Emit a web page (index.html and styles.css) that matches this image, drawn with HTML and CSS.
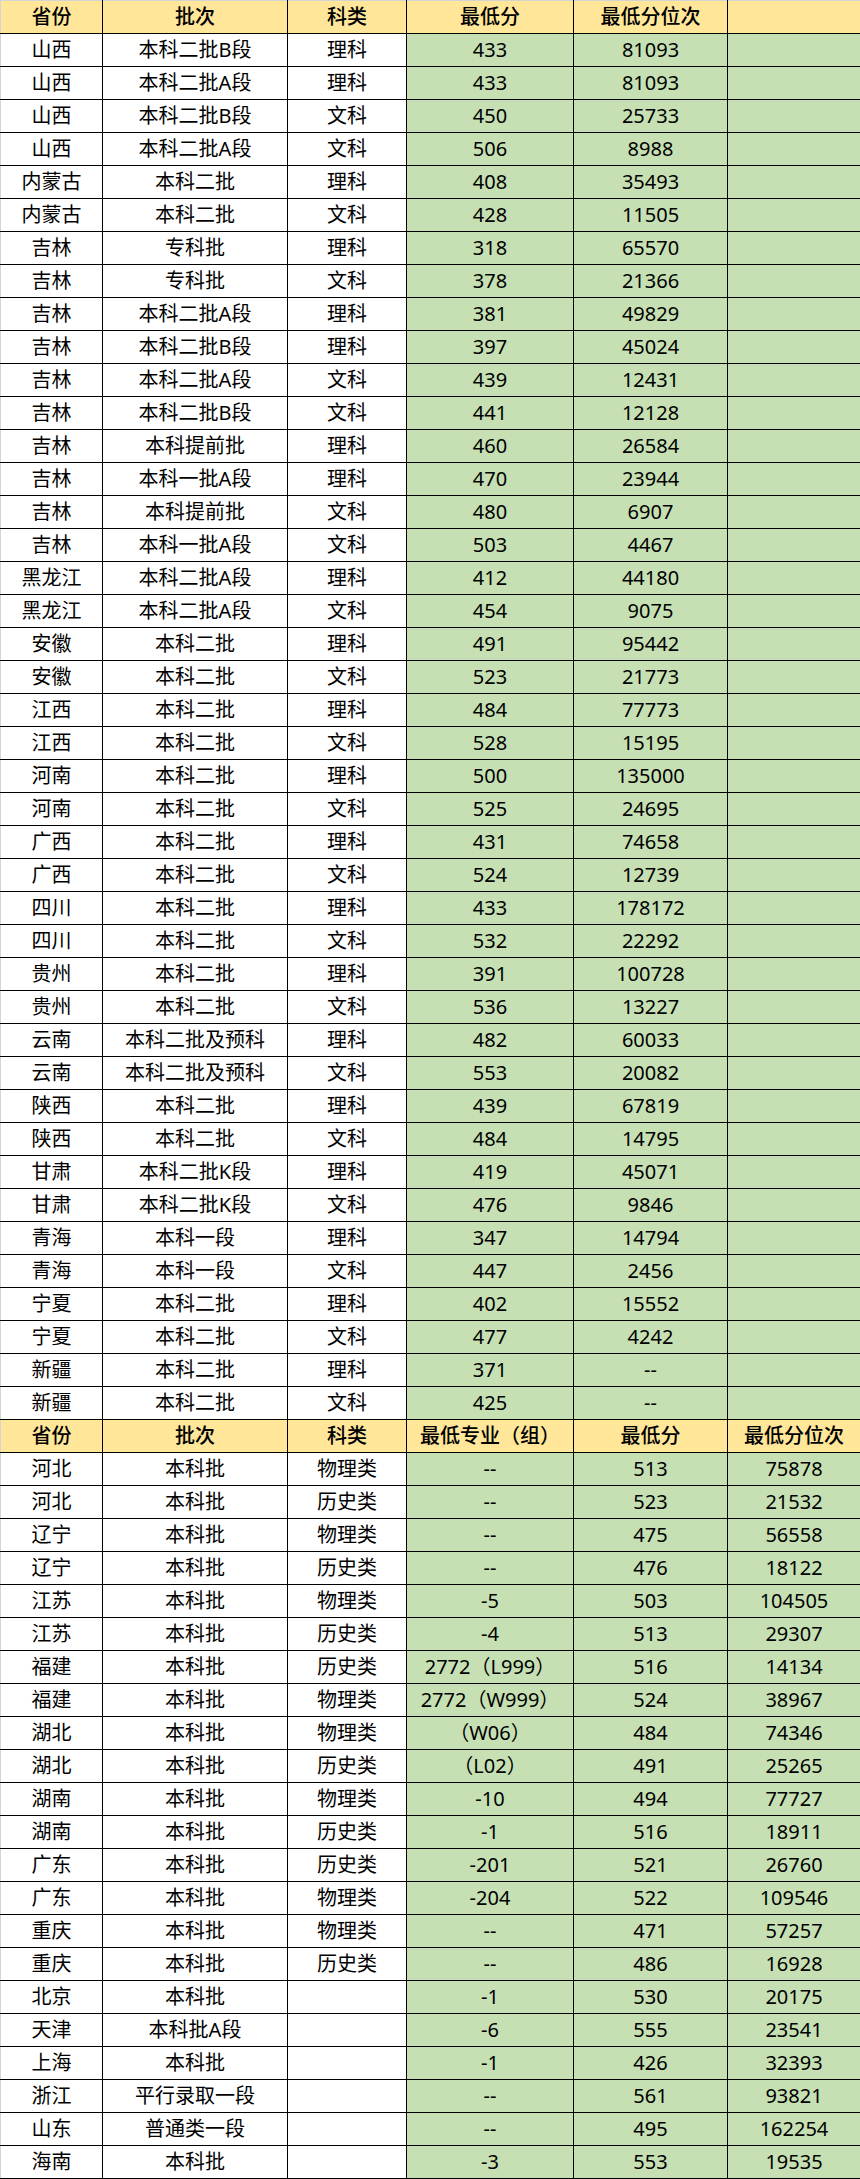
FILE: index.html
```html
<!DOCTYPE html>
<html lang="zh-CN">
<head>
<meta charset="utf-8">
<title>录取分数</title>
<link rel="stylesheet" href="styles.css">
</head>
<body>
<table class="sheet">
<colgroup>
<col class="c1"><col class="c2"><col class="c3"><col class="c4"><col class="c5"><col class="c6">
</colgroup>
<tbody>
<tr class="hd first"><td>省份</td><td>批次</td><td>科类</td><td>最低分</td><td>最低分位次</td><td></td></tr>
<tr><td>山西</td><td>本科二批B段</td><td>理科</td><td class="g">433</td><td class="g">81093</td><td class="g"></td></tr>
<tr><td>山西</td><td>本科二批A段</td><td>理科</td><td class="g">433</td><td class="g">81093</td><td class="g"></td></tr>
<tr><td>山西</td><td>本科二批B段</td><td>文科</td><td class="g">450</td><td class="g">25733</td><td class="g"></td></tr>
<tr><td>山西</td><td>本科二批A段</td><td>文科</td><td class="g">506</td><td class="g">8988</td><td class="g"></td></tr>
<tr><td>内蒙古</td><td>本科二批</td><td>理科</td><td class="g">408</td><td class="g">35493</td><td class="g"></td></tr>
<tr><td>内蒙古</td><td>本科二批</td><td>文科</td><td class="g">428</td><td class="g">11505</td><td class="g"></td></tr>
<tr><td>吉林</td><td>专科批</td><td>理科</td><td class="g">318</td><td class="g">65570</td><td class="g"></td></tr>
<tr><td>吉林</td><td>专科批</td><td>文科</td><td class="g">378</td><td class="g">21366</td><td class="g"></td></tr>
<tr><td>吉林</td><td>本科二批A段</td><td>理科</td><td class="g">381</td><td class="g">49829</td><td class="g"></td></tr>
<tr><td>吉林</td><td>本科二批B段</td><td>理科</td><td class="g">397</td><td class="g">45024</td><td class="g"></td></tr>
<tr><td>吉林</td><td>本科二批A段</td><td>文科</td><td class="g">439</td><td class="g">12431</td><td class="g"></td></tr>
<tr><td>吉林</td><td>本科二批B段</td><td>文科</td><td class="g">441</td><td class="g">12128</td><td class="g"></td></tr>
<tr><td>吉林</td><td>本科提前批</td><td>理科</td><td class="g">460</td><td class="g">26584</td><td class="g"></td></tr>
<tr><td>吉林</td><td>本科一批A段</td><td>理科</td><td class="g">470</td><td class="g">23944</td><td class="g"></td></tr>
<tr><td>吉林</td><td>本科提前批</td><td>文科</td><td class="g">480</td><td class="g">6907</td><td class="g"></td></tr>
<tr><td>吉林</td><td>本科一批A段</td><td>文科</td><td class="g">503</td><td class="g">4467</td><td class="g"></td></tr>
<tr><td>黑龙江</td><td>本科二批A段</td><td>理科</td><td class="g">412</td><td class="g">44180</td><td class="g"></td></tr>
<tr><td>黑龙江</td><td>本科二批A段</td><td>文科</td><td class="g">454</td><td class="g">9075</td><td class="g"></td></tr>
<tr><td>安徽</td><td>本科二批</td><td>理科</td><td class="g">491</td><td class="g">95442</td><td class="g"></td></tr>
<tr><td>安徽</td><td>本科二批</td><td>文科</td><td class="g">523</td><td class="g">21773</td><td class="g"></td></tr>
<tr><td>江西</td><td>本科二批</td><td>理科</td><td class="g">484</td><td class="g">77773</td><td class="g"></td></tr>
<tr><td>江西</td><td>本科二批</td><td>文科</td><td class="g">528</td><td class="g">15195</td><td class="g"></td></tr>
<tr><td>河南</td><td>本科二批</td><td>理科</td><td class="g">500</td><td class="g">135000</td><td class="g"></td></tr>
<tr><td>河南</td><td>本科二批</td><td>文科</td><td class="g">525</td><td class="g">24695</td><td class="g"></td></tr>
<tr><td>广西</td><td>本科二批</td><td>理科</td><td class="g">431</td><td class="g">74658</td><td class="g"></td></tr>
<tr><td>广西</td><td>本科二批</td><td>文科</td><td class="g">524</td><td class="g">12739</td><td class="g"></td></tr>
<tr><td>四川</td><td>本科二批</td><td>理科</td><td class="g">433</td><td class="g">178172</td><td class="g"></td></tr>
<tr><td>四川</td><td>本科二批</td><td>文科</td><td class="g">532</td><td class="g">22292</td><td class="g"></td></tr>
<tr><td>贵州</td><td>本科二批</td><td>理科</td><td class="g">391</td><td class="g">100728</td><td class="g"></td></tr>
<tr><td>贵州</td><td>本科二批</td><td>文科</td><td class="g">536</td><td class="g">13227</td><td class="g"></td></tr>
<tr><td>云南</td><td>本科二批及预科</td><td>理科</td><td class="g">482</td><td class="g">60033</td><td class="g"></td></tr>
<tr><td>云南</td><td>本科二批及预科</td><td>文科</td><td class="g">553</td><td class="g">20082</td><td class="g"></td></tr>
<tr><td>陕西</td><td>本科二批</td><td>理科</td><td class="g">439</td><td class="g">67819</td><td class="g"></td></tr>
<tr><td>陕西</td><td>本科二批</td><td>文科</td><td class="g">484</td><td class="g">14795</td><td class="g"></td></tr>
<tr><td>甘肃</td><td>本科二批K段</td><td>理科</td><td class="g">419</td><td class="g">45071</td><td class="g"></td></tr>
<tr><td>甘肃</td><td>本科二批K段</td><td>文科</td><td class="g">476</td><td class="g">9846</td><td class="g"></td></tr>
<tr><td>青海</td><td>本科一段</td><td>理科</td><td class="g">347</td><td class="g">14794</td><td class="g"></td></tr>
<tr><td>青海</td><td>本科一段</td><td>文科</td><td class="g">447</td><td class="g">2456</td><td class="g"></td></tr>
<tr><td>宁夏</td><td>本科二批</td><td>理科</td><td class="g">402</td><td class="g">15552</td><td class="g"></td></tr>
<tr><td>宁夏</td><td>本科二批</td><td>文科</td><td class="g">477</td><td class="g">4242</td><td class="g"></td></tr>
<tr><td>新疆</td><td>本科二批</td><td>理科</td><td class="g">371</td><td class="g">--</td><td class="g"></td></tr>
<tr><td>新疆</td><td>本科二批</td><td>文科</td><td class="g">425</td><td class="g">--</td><td class="g"></td></tr>
<tr class="hd"><td>省份</td><td>批次</td><td>科类</td><td>最低专业（组）</td><td>最低分</td><td>最低分位次</td></tr>
<tr><td>河北</td><td>本科批</td><td>物理类</td><td class="g">--</td><td class="g">513</td><td class="g">75878</td></tr>
<tr><td>河北</td><td>本科批</td><td>历史类</td><td class="g">--</td><td class="g">523</td><td class="g">21532</td></tr>
<tr><td>辽宁</td><td>本科批</td><td>物理类</td><td class="g">--</td><td class="g">475</td><td class="g">56558</td></tr>
<tr><td>辽宁</td><td>本科批</td><td>历史类</td><td class="g">--</td><td class="g">476</td><td class="g">18122</td></tr>
<tr><td>江苏</td><td>本科批</td><td>物理类</td><td class="g">-5</td><td class="g">503</td><td class="g">104505</td></tr>
<tr><td>江苏</td><td>本科批</td><td>历史类</td><td class="g">-4</td><td class="g">513</td><td class="g">29307</td></tr>
<tr><td>福建</td><td>本科批</td><td>历史类</td><td class="g">2772（L999）</td><td class="g">516</td><td class="g">14134</td></tr>
<tr><td>福建</td><td>本科批</td><td>物理类</td><td class="g">2772（W999）</td><td class="g">524</td><td class="g">38967</td></tr>
<tr><td>湖北</td><td>本科批</td><td>物理类</td><td class="g">（W06）</td><td class="g">484</td><td class="g">74346</td></tr>
<tr><td>湖北</td><td>本科批</td><td>历史类</td><td class="g">（L02）</td><td class="g">491</td><td class="g">25265</td></tr>
<tr><td>湖南</td><td>本科批</td><td>物理类</td><td class="g">-10</td><td class="g">494</td><td class="g">77727</td></tr>
<tr><td>湖南</td><td>本科批</td><td>历史类</td><td class="g">-1</td><td class="g">516</td><td class="g">18911</td></tr>
<tr><td>广东</td><td>本科批</td><td>历史类</td><td class="g">-201</td><td class="g">521</td><td class="g">26760</td></tr>
<tr><td>广东</td><td>本科批</td><td>物理类</td><td class="g">-204</td><td class="g">522</td><td class="g">109546</td></tr>
<tr><td>重庆</td><td>本科批</td><td>物理类</td><td class="g">--</td><td class="g">471</td><td class="g">57257</td></tr>
<tr><td>重庆</td><td>本科批</td><td>历史类</td><td class="g">--</td><td class="g">486</td><td class="g">16928</td></tr>
<tr><td>北京</td><td>本科批</td><td></td><td class="g">-1</td><td class="g">530</td><td class="g">20175</td></tr>
<tr><td>天津</td><td>本科批A段</td><td></td><td class="g">-6</td><td class="g">555</td><td class="g">23541</td></tr>
<tr><td>上海</td><td>本科批</td><td></td><td class="g">-1</td><td class="g">426</td><td class="g">32393</td></tr>
<tr><td>浙江</td><td>平行录取一段</td><td></td><td class="g">--</td><td class="g">561</td><td class="g">93821</td></tr>
<tr><td>山东</td><td>普通类一段</td><td></td><td class="g">--</td><td class="g">495</td><td class="g">162254</td></tr>
<tr><td>海南</td><td>本科批</td><td></td><td class="g">-3</td><td class="g">553</td><td class="g">19535</td></tr>
</tbody>
</table>
</body>
</html>
```

FILE: styles.css
```css
html, body {
  margin: 0;
  padding: 0;
  background: #ffffff;
}

.sheet {
  border-collapse: collapse;
  table-layout: fixed;
  width: 860px;
  font-family: "Noto Sans", "Noto Sans CJK SC", sans-serif;
  font-size: 20px;
  color: #000000;
}

.c1 { width: 102px; }
.c2 { width: 185px; }
.c3 { width: 119px; }
.c4 { width: 167px; }
.c5 { width: 154px; }
.c6 { width: 133px; }

.sheet td {
  height: 32px;
  padding: 0;
  border: 1px solid #000000;
  text-align: center;
  vertical-align: middle;
  line-height: 30px;
  white-space: nowrap;
  overflow: hidden;
  background: #ffffff;
}

.sheet td:first-child {
  border-left: 1px solid #d4d4d4;
}

.sheet .first td {
  border-top: 1px solid #d4d4d4;
}

.sheet .hd td {
  background: #ffe699;
  font-weight: 500;
}

.sheet td.g {
  background: #c6e0b4;
}
```
